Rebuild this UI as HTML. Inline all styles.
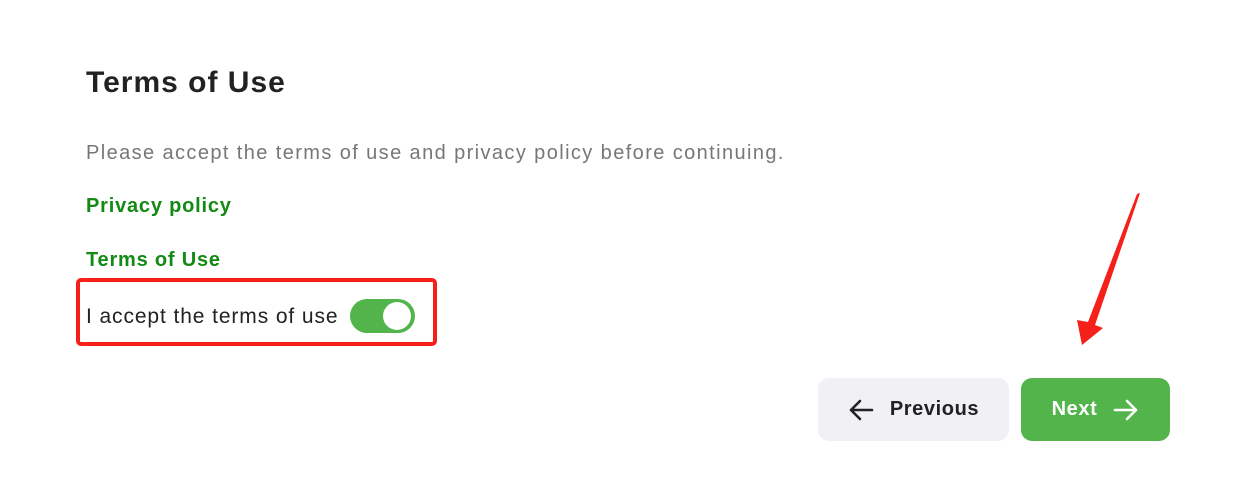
<!DOCTYPE html>
<html><head><style>
body{margin:0;width:1235px;height:497px;background:#fff;font-family:"Liberation Sans",sans-serif;position:relative;overflow:hidden}
.a{position:absolute;white-space:nowrap}
h1{position:absolute;left:86px;top:66px;margin:0;font-size:30px;font-weight:bold;color:#222;letter-spacing:1px}
.p{left:86px;top:142px;font-size:20px;color:#777;letter-spacing:1.4px}
.l{left:86px;font-size:20px;font-weight:bold;color:#138a13;letter-spacing:0.8px}
.box{left:76px;top:278px;width:353px;height:60px;border:4px solid #f5201a;border-radius:5px}
.t{left:86px;top:305px;font-size:21px;color:#222;letter-spacing:0.9px}
.tg{left:350px;top:299px;width:65px;height:34px;border-radius:17px;background:#52b44b}
.kn{position:absolute;right:4px;top:3px;width:28px;height:28px;border-radius:50%;background:#fff}
.btn{top:378px;height:63px;border-radius:11px;font-size:20px;font-weight:bold;display:flex;align-items:center;justify-content:center;gap:16px;letter-spacing:0.6px}
</style></head><body>
<h1>Terms of Use</h1>
<div class="a p">Please accept the terms of use and privacy policy before continuing.</div>
<div class="a l" style="top:195px">Privacy policy</div>
<div class="a l" style="top:249px">Terms of Use</div>
<div class="a box"></div>
<div class="a t">I accept the terms of use</div>
<div class="a tg"><div class="kn"></div></div>
<div class="a btn" style="left:818px;width:191px;background:#f0f0f5;color:#222">
<svg width="26" height="22" viewBox="0 0 26 22"><path d="M24 11H3M12 2L3 11l9 9" fill="none" stroke="#222" stroke-width="2.6" stroke-linecap="round" stroke-linejoin="round"/></svg>Previous</div>
<div class="a btn" style="left:1021px;width:149px;background:#52b44b;color:#fff">Next
<svg width="26" height="22" viewBox="0 0 26 22"><path d="M2 11h21M14 2l9 9-9 9" fill="none" stroke="#fff" stroke-width="2.6" stroke-linecap="round" stroke-linejoin="round"/></svg></div>
<svg class="a" style="left:0;top:0" width="1235" height="497"><polygon points="1140,193 1137,194 1088,322 1077,320 1082,345 1103,328 1095,325" fill="#f5201a"/></svg>
</body></html>
